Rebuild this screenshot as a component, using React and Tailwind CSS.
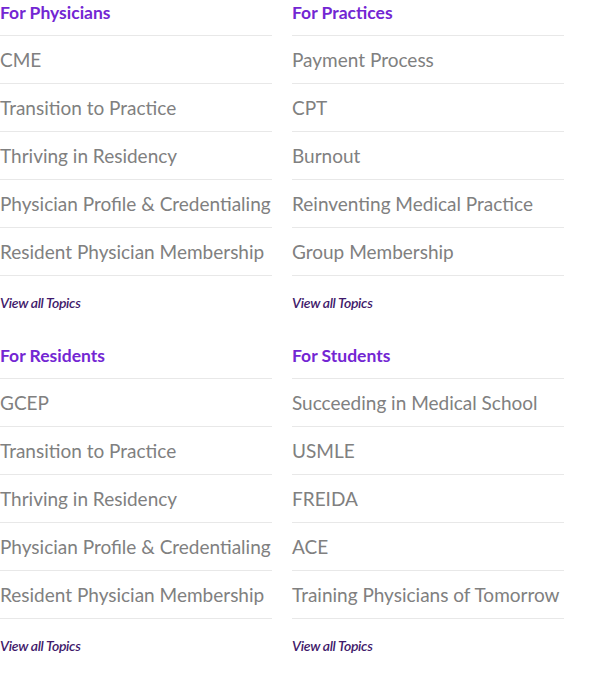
const sections = [
  { title: "For Physicians", items: ["CME", "Transition to Practice", "Thriving in Residency", "Physician Profile & Credentialing", "Resident Physician Membership"] },
  { title: "For Practices", items: ["Payment Process", "CPT", "Burnout", "Reinventing Medical Practice", "Group Membership"] },
  { title: "For Residents", items: ["GCEP", "Transition to Practice", "Thriving in Residency", "Physician Profile & Credentialing", "Resident Physician Membership"] },
  { title: "For Students", items: ["Succeeding in Medical School", "USMLE", "FREIDA", "ACE", "Training Physicians of Tomorrow"] },
];

export default function App() {
  return (
    <div className="w-[600px] h-[686px] bg-white" style={{ fontFamily: "Lato, 'Open Sans', sans-serif" }}>
      <div className="grid grid-cols-[272px_272px] gap-x-5 gap-y-[30px]">
        {sections.map((s) => (
          <div key={s.title} className="flex flex-col">
            <div className="text-[17.5px] font-bold leading-[26px] pb-[9px] border-b border-[#e8e8e8] text-[#7326d3]">
              {s.title}
            </div>
            {s.items.map((it) => (
              <div key={it} className="h-12 flex items-center pt-[2px] border-b border-[#e8e8e8] text-[19px] text-[#808080] whitespace-nowrap">
                {it}
              </div>
            ))}
            <a className="mt-[17px] leading-[20px] text-[14px] italic font-semibold text-[#3f1a6b] tracking-[-0.3px]">
              View all Topics
            </a>
          </div>
        ))}
      </div>
    </div>
  );
}
